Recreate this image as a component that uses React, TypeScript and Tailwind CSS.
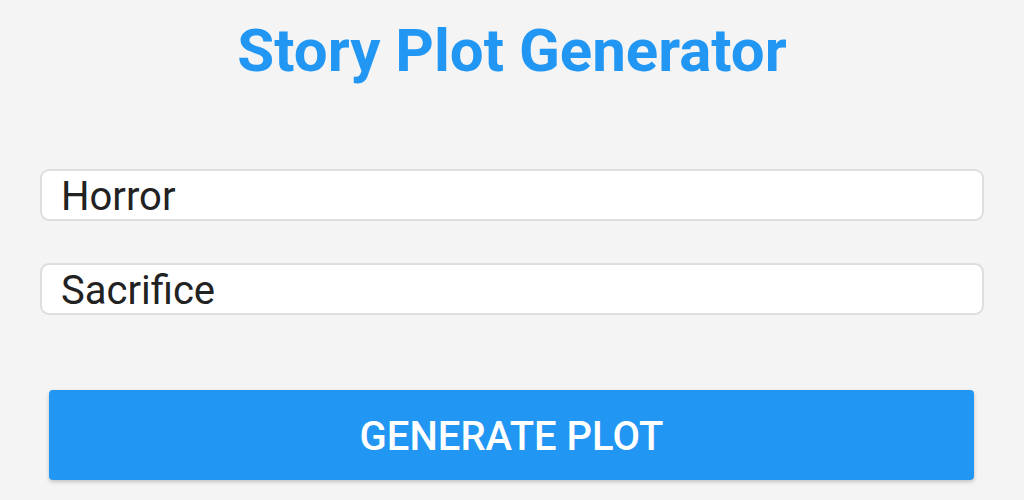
const App = () => {
    return (
        <main className="min-h-screen h-[500px] bg-[#f4f4f4] font-['Roboto',sans-serif] overflow-hidden">
            <div className="flex flex-col">
                <h1 className="pt-[15px] text-center text-[60px] leading-[72px] font-bold text-[#2196f3]">
                    Story Plot Generator
                </h1>

                <div className="mt-[82px] flex flex-col gap-[42px] px-[40px]">
                    <input
                        type="text"
                        defaultValue="Horror"
                        className="h-[52px] w-full rounded-[9px] border-2 border-[#dedede] bg-white px-[19px] pt-[3px] text-[40px] text-[#222] outline-none"
                    />
                    <input
                        type="text"
                        defaultValue="Sacrifice"
                        className="h-[52px] w-full rounded-[9px] border-2 border-[#dedede] bg-white px-[19px] pt-[3px] text-[40px] text-[#222] outline-none"
                    />
                </div>

                <div className="mt-[75px] px-[49px] pr-[50px]">
                    <button className="h-[90px] w-full rounded-[4px] bg-[#2196f3] pt-[4px] text-[40px] font-medium text-white shadow-[0_2px_4px_rgba(0,0,0,0.2)]">
                        GENERATE PLOT
                    </button>
                </div>
            </div>
        </main>
    );
};

export default App;
